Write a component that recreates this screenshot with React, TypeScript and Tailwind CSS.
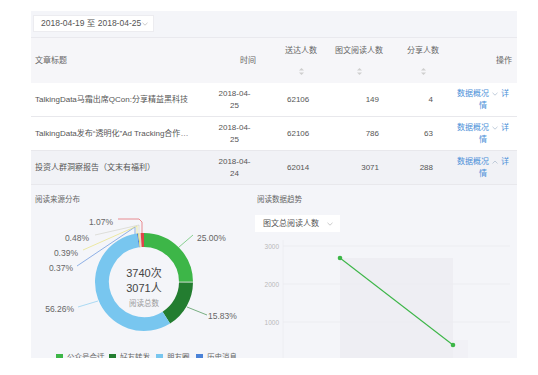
import React from 'react';

type Row = {
  title: string;
  date: string;
  day: string;
  sent: number;
  reads: number;
  shares: number;
  open?: boolean;
  hover?: boolean;
};

const ROWS: Row[] = [
  { title: 'TalkingData马霜出席QCon:分享精益黑科技', date: '2018-04-', day: '25', sent: 62106, reads: 149, shares: 4 },
  { title: 'TalkingData发布“透明化”Ad Tracking合作伙伴计划', date: '2018-04-', day: '25', sent: 62106, reads: 786, shares: 63 },
  { title: '投资人群洞察报告（文末有福利）', date: '2018-04-', day: '24', sent: 62014, reads: 3071, shares: 288, open: true, hover: true },
];

// donut slices, clockwise from 12 o'clock
const SLICES = [
  { pct: 25.0, color: '#3db648' },
  { pct: 15.83, color: '#237d30' },
  { pct: 56.26, color: '#78c6ef' },
  { pct: 0.37, color: '#4a82d8' },
  { pct: 0.39, color: '#e6df6a' },
  { pct: 0.48, color: '#dcdccc' },
  { pct: 1.07, color: '#e0454a' },
];

const SortIcon = () => (
  <svg width="5" height="7" viewBox="0 0 5 7">
    <path d="M2.5 0 L5 2.6 L0 2.6 Z" fill="#cfcfcf" />
    <path d="M0 4.4 L5 4.4 L2.5 7 Z" fill="#cfcfcf" />
  </svg>
);

const Caret = ({ up = false, color = '#b5b5b5' }: { up?: boolean; color?: string }) => (
  <svg width="6" height="4" viewBox="0 0 6 4" className="inline-block">
    <path d={up ? 'M0.5 3.5 L3 1 L5.5 3.5' : 'M0.5 0.8 L3 3.2 L5.5 0.8'} fill="none" stroke={color} strokeWidth="0.9" />
  </svg>
);

const arcPath = (cx: number, cy: number, r: number, a0: number, a1: number) => {
  const p = (a: number) => [cx + r * Math.sin(a), cy - r * Math.cos(a)];
  const [x0, y0] = p(a0);
  const [x1, y1] = p(a1);
  const large = a1 - a0 > Math.PI ? 1 : 0;
  return `M${x0} ${y0} A${r} ${r} 0 ${large} 1 ${x1} ${y1}`;
};

const Donut = () => {
  const total = SLICES.reduce((s, x) => s + x.pct, 0);
  let acc = 0;
  const cx = 113;
  const cy = 77;
  const font = "'Liberation Sans','Noto Sans CJK SC',sans-serif";
  return (
    <svg width="219" height="153" viewBox="0 0 219 153" style={{ fontFamily: font }}>
      {SLICES.map((s, i) => {
        const a0 = (acc / total) * Math.PI * 2;
        acc += s.pct;
        const a1 = (acc / total) * Math.PI * 2;
        return <path key={i} d={arcPath(cx, cy, 42, a0, a1)} fill="none" stroke={s.color} strokeWidth="14" />;
      })}
      <line x1={cx + 35} y1={cy} x2={cx + 49} y2={cy} stroke="#d8dcd8" strokeWidth="0.8" />

      {/* leader lines */}
      <polyline points="147.6,42.4 162,30" fill="none" stroke="#3db648" strokeWidth="0.6" />
      <polyline points="156,102 176,110" fill="none" stroke="#237d30" strokeWidth="0.6" />
      <polyline points="67,96 47,102" fill="none" stroke="#78c6ef" strokeWidth="0.6" />
      <polyline points="46,61 104,22 104,29" fill="none" stroke="#4a82d8" strokeWidth="0.6" />
      <polyline points="52,45 106,21 106,29" fill="none" stroke="#e6df6a" strokeWidth="0.6" />
      <polyline points="64,30 108,20 108,29" fill="none" stroke="#cfcfc4" strokeWidth="0.6" />
      <polyline points="87,14 108,14 111,17 111,29" fill="none" stroke="#e0454a" strokeWidth="0.6" />

      <g fontSize="8.5" fill="#666">
        <text x="166" y="36">25.00%</text>
        <text x="177" y="114">15.83%</text>
        <text x="43" y="107" textAnchor="end">56.26%</text>
        <text x="42" y="66" textAnchor="end">0.37%</text>
        <text x="47" y="51" textAnchor="end">0.39%</text>
        <text x="58" y="36" textAnchor="end">0.48%</text>
        <text x="82" y="20" textAnchor="end">1.07%</text>
      </g>

      <text x={cx} y={cy - 5} textAnchor="middle" fontSize="11" fill="#444">3740次</text>
      <text x={cx} y={cy + 10} textAnchor="middle" fontSize="11" fill="#444">3071人</text>
      <text x={cx} y={cy + 24} textAnchor="middle" fontSize="7.5" fill="#9a9a9a">阅读总数</text>

      <g fontSize="7.5" fill="#666">
        <rect x="25" y="149" width="7" height="7" fill="#3db648" />
        <text x="36" y="155">公众号会话</text>
        <rect x="78" y="149" width="7" height="7" fill="#237d30" />
        <text x="89" y="155">好友转发</text>
        <rect x="125" y="149" width="7" height="7" fill="#78c6ef" />
        <text x="136" y="155">朋友圈</text>
        <rect x="165" y="149" width="7" height="7" fill="#4a82d8" />
        <text x="176" y="155">历史消息</text>
      </g>
    </svg>
  );
};

const Trend = () => (
  <svg width="267" height="118" viewBox="0 0 267 118" style={{ fontFamily: "'Liberation Sans',sans-serif" }}>
    <rect x="90" y="18" width="113" height="100" fill="#eeeef3" />
    <rect x="203" y="100" width="15" height="18" fill="#f1f1f6" />
    <line x1="33" y1="6" x2="260" y2="6" stroke="#ebebf0" strokeWidth="0.8" />
    <line x1="33" y1="44" x2="260" y2="44" stroke="#ebebf0" strokeWidth="0.8" />
    <line x1="33" y1="82" x2="260" y2="82" stroke="#ebebf0" strokeWidth="0.8" />
    <line x1="33" y1="0" x2="33" y2="118" stroke="#ececf1" strokeWidth="0.8" />
    <g fontSize="6.5" fill="#b9b9b9" textAnchor="end">
      <text x="29" y="8.5">3000</text>
      <text x="29" y="46.5">2000</text>
      <text x="29" y="84.5">1000</text>
    </g>
    <line x1="90" y1="18" x2="203" y2="105" stroke="#3db648" strokeWidth="1.1" />
    <circle cx="90" cy="18" r="2.3" fill="#3db648" />
    <circle cx="203" cy="105" r="2.3" fill="#3db648" />
  </svg>
);

const App: React.FC = () => {
  return (
    <div className="w-[538px] h-[375px] bg-white pt-[11px] pl-[31px] font-['Liberation_Sans','Noto_Sans_CJK_SC',sans-serif]">
      <div className="w-[486px] h-[347px] bg-[#f4f5f9] overflow-hidden flex flex-col">
        {/* date range */}
        <div className="h-[26px] shrink-0 pt-[4px] pl-[2px]">
          <div className="w-[121px] h-[17px] bg-white border border-[#ececf0] flex items-center pl-[7px] pr-[5px] justify-between">
            <span className="text-[8.5px] text-[#555] leading-none">2018-04-19 至 2018-04-25</span>
            <Caret color="#c4c4c4" />
          </div>
        </div>

        {/* table header */}
        <div className="h-[46px] shrink-0 flex border-t border-[#e9e9ee] bg-[#f6f6f9] text-[8px] text-[#666] leading-[8px]">
          <div className="w-[184px] pl-[4px] flex items-center">文章标题</div>
          <div className="w-[45px] flex items-center justify-end pr-[4px]">时间</div>
          <div className="w-[73px] pl-[25px] pt-[9px]">
            <div className="inline-flex flex-col items-center gap-[13px]">
              <span>送达人数</span>
              <SortIcon />
            </div>
          </div>
          <div className="w-[71px] pl-[2px] pt-[9px]">
            <div className="inline-flex flex-col items-center gap-[13px]">
              <span>图文阅读人数</span>
              <SortIcon />
            </div>
          </div>
          <div className="w-[45px] pl-[3px] pt-[9px]">
            <div className="inline-flex flex-col items-center gap-[13px]">
              <span>分享人数</span>
              <SortIcon />
            </div>
          </div>
          <div className="w-[68px] flex items-center justify-end pr-[5px]">操作</div>
        </div>

        {/* rows */}
        {ROWS.map((r, i) => (
          <div
            key={i}
            className={`h-[34px] shrink-0 flex items-center border-b border-[#e8e8ec] text-[8px] text-[#555] ${r.hover ? 'bg-[#f1f2f6]' : 'bg-white'}`}
          >
            <div className="w-[184px] pl-[4px] pr-[19px] truncate leading-[12px]">{r.title}</div>
            <div className="w-[45px] flex flex-col items-center leading-[12px] pr-[6px]">
              <span>{r.date}</span>
              <span>{r.day}</span>
            </div>
            <div className="w-[73px] pl-[27px]">{r.sent}</div>
            <div className="w-[71px] text-right pr-[25px]">{r.reads}</div>
            <div className="w-[45px] text-right pr-[16px]">{r.shares}</div>
            <div className="w-[68px] pl-[6px] pr-[6px] text-center leading-[12px] text-[#4a8fd8]">
              <div className="flex items-center justify-center gap-[3px]">
                <span>数据概况</span>
                <Caret up={r.open} color="#b9c6d6" />
                <span>详</span>
              </div>
              <div>情</div>
            </div>
          </div>
        ))}

        {/* charts */}
        <div className="flex flex-1 min-h-0">
          <div className="w-[219px] flex flex-col">
            <div className="pt-[10px] pl-[4px] h-[20px] text-[7.5px] leading-[10px] text-[#666]">阅读来源分布</div>
            <Donut />
          </div>
          <div className="flex-1 flex flex-col">
            <div className="pt-[10px] pl-[7px] h-[20px] text-[7.5px] leading-[10px] text-[#666]">阅读数据趋势</div>
            <div className="mt-[10px] ml-[5px] w-[85px] h-[17px] bg-white flex items-center justify-between pl-[8px] pr-[7px]">
              <span className="text-[8px] text-[#555] leading-none">图文总阅读人数</span>
              <Caret color="#c4c4c4" />
            </div>
            <div className="mt-[8px]">
              <Trend />
            </div>
          </div>
        </div>
      </div>
    </div>
  );
};

export default App;
